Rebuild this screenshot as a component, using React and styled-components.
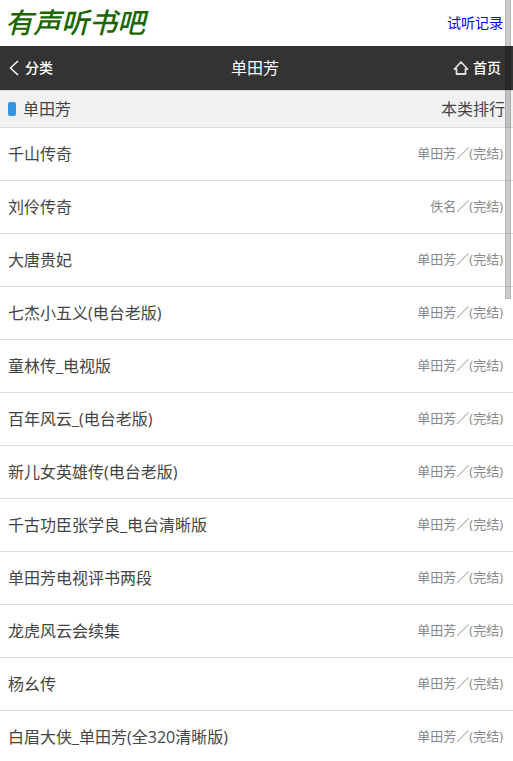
import React from 'react'
import styled, { createGlobalStyle } from 'styled-components'

const books = [
 { title: '千山传奇', author: '单田芳' },
 { title: '刘伶传奇', author: '佚名' },
 { title: '大唐贵妃', author: '单田芳' },
 { title: '七杰小五义(电台老版)', author: '单田芳' },
 { title: '童林传_电视版', author: '单田芳' },
 { title: '百年风云_(电台老版)', author: '单田芳' },
 { title: '新儿女英雄传(电台老版)', author: '单田芳' },
 { title: '千古功臣张学良_电台清晰版', author: '单田芳' },
 { title: '单田芳电视评书两段', author: '单田芳' },
 { title: '龙虎风云会续集', author: '单田芳' },
 { title: '杨幺传', author: '单田芳' },
 { title: '白眉大侠_单田芳(全320清晰版)', author: '单田芳' },
]

function App() {
 return (
  <>
   <GlobalStyle />
   <Header>
    <Logo href="#">有声听书吧</Logo>
    <HistoryLink href="#">试听记录</HistoryLink>
   </Header>
   <Nav>
    <NavLink href="#">
     <svg width="10" height="16" viewBox="0 0 10 16" fill="none" stroke="#fff" strokeWidth="1.5">
      <path d="M9 1L1.5 8L9 15" />
     </svg>
     分类
    </NavLink>
    <NavTitle>单田芳</NavTitle>
    <NavLink href="#" $right>
     <svg width="16" height="16" viewBox="0 0 16 16" fill="none" stroke="#ddd" strokeWidth="1.8" strokeLinejoin="round">
      <path d="M8 2L1.5 9H3.5V14H12.5V9H14.5Z" />
     </svg>
     首页
    </NavLink>
   </Nav>
   <main>
    <SubHeader>
     <SubTitle>单田芳</SubTitle>
     <RankLink href="#">本类排行</RankLink>
    </SubHeader>
    <List>
     {books.map((book) => (
      <li key={book.title}>
       <Row href="#">
        <span>{book.title}</span>
        <Author>{book.author}／(完结)</Author>
       </Row>
      </li>
     ))}
    </List>
   </main>
   <ScrollThumb aria-hidden="true" />
  </>
 )
}

export default App

const GlobalStyle = createGlobalStyle`
 * {
  box-sizing: border-box;
 }

 html {
  scrollbar-width: none;
 }

 body {
  margin: 0;
  background: #fff;
  color: #444;
  font-family: 'Open Sans', 'Noto Sans CJK SC', sans-serif;
  font-size: 16px;
  line-height: 24px;
 }

 a {
  color: inherit;
  text-decoration: none;
 }
`

const Header = styled.header`
 height: 46px;
 padding: 0 10px 0 5px;
 display: flex;
 justify-content: space-between;
 align-items: center;
`

const Logo = styled.a`
 && {
  color: #1a6600;
 }
 padding-bottom: 2px;
 font-size: 28px;
 font-style: italic;
 font-weight: 500;
`

const HistoryLink = styled.a`
 && {
  color: #00f;
 }
 font-size: 14px;
`

const Nav = styled.nav`
 height: 44px;
 padding: 0 12px 0 9px;
 display: grid;
 grid-template-columns: 1fr auto 1fr;
 align-items: center;
 background: #333;
 color: #fff;
`

const NavLink = styled.a`
 display: flex;
 align-items: center;
 justify-content: ${(props) => (props.$right ? 'flex-end' : 'flex-start')};
 gap: ${(props) => (props.$right ? '4px' : '6px')};
 font-size: 14px;
 font-weight: 500;
`

const NavTitle = styled.h1`
 margin: 0;
 font-size: 16px;
 font-weight: 400;
`

const SubHeader = styled.div`
 height: 38px;
 padding: 0 8px;
 display: flex;
 justify-content: space-between;
 align-items: center;
 background: #f1f1f1;
 border-top: 1px solid #ddd;
 border-bottom: 1px solid #ddd;
`

const SubTitle = styled.h2`
 margin: 0;
 display: flex;
 align-items: center;
 gap: 7px;
 font-size: 16px;
 font-weight: 400;

 &::before {
  content: '';
  width: 8px;
  height: 14px;
  border-radius: 2px;
  background: #3595e5;
 }
`

const RankLink = styled.a`
 font-size: 16px;
`

const List = styled.ul`
 margin: 0;
 padding: 0;
 list-style: none;
`

const Row = styled.a`
 height: 53px;
 padding: 0 10px 0 8px;
 display: flex;
 justify-content: space-between;
 align-items: center;
 border-bottom: 1px solid #ddd;
`

const Author = styled.span`
 padding-bottom: 2px;
 color: #888;
 font-size: 13px;
`

// thin overlay scrollbar, sits on top of everything
const ScrollThumb = styled.div`
 position: fixed;
 top: 0;
 right: 2px;
 width: 6px;
 height: 299px;
 background: rgba(0, 0, 0, 0.2);
 border: 1px solid rgba(0, 0, 0, 0.1);
 border-top: 0;
`
